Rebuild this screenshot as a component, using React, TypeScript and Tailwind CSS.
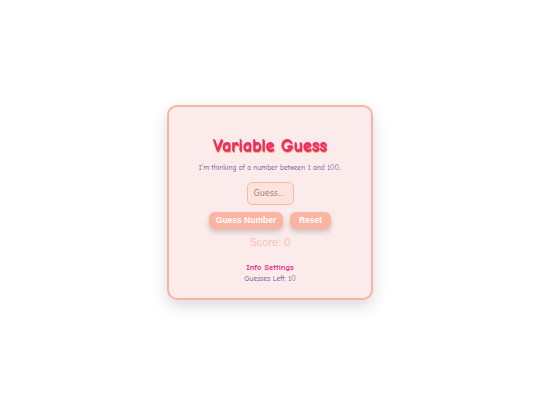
import React, { useState } from 'react';

const comic = { fontFamily: '"Comic Sans MS", "Comic Neue", "Chalkboard SE", cursive' };

export default function App() {
  const [guess, setGuess] = useState('');
  const [score, setScore] = useState(0);
  const [left, setLeft] = useState(10);

  return (
    <div className="w-[540px] h-[405px] bg-white flex items-center justify-center">
      <div
        className="w-[206px] h-[195px] mt-[-1px] flex flex-col items-center rounded-[10px] border-2 border-[#f9b3a3] bg-[#fbeceb] shadow-[0_6px_16px_rgba(0,0,0,0.15)] pt-[28px]"
        style={comic}
      >
        <h1 className="text-[18px] leading-[22px] font-bold text-[#ec2f6a] [text-shadow:0.5px_0.5px_0_#ec2f6a,1px_1.5px_0_#f9b25c]">
          Variable Guess
        </h1>
        <p className="mt-[6px] text-[7.3px] leading-[10px] text-[#6b4c8c]">
          I'm thinking of a number between 1 and 100..
        </p>
        <input
          value={guess}
          onChange={(e) => setGuess(e.target.value)}
          placeholder="Guess.."
          className="mt-[9px] w-[47px] h-[23px] px-[6px] rounded-[5px] border border-[#f8b9a6] bg-[#fde3db] text-[8px] text-[#7a6a6a] placeholder-[#8f8585] outline-none font-['DejaVu_Sans',sans-serif]"
        />
        <div className="mt-[7px] flex gap-[7px] font-['Liberation_Sans',Arial,sans-serif]">
          <button
            onClick={() => setLeft((l) => Math.max(0, l - 1))}
            className="w-[74px] h-[17px] rounded-[6px] bg-[#fbb4a2] text-white text-[8.5px] font-bold shadow-[0_3px_5px_rgba(0,0,0,0.18)]"
          >
            Guess Number
          </button>
          <button
            onClick={() => {
              setScore(0);
              setLeft(10);
              setGuess('');
            }}
            className="w-[41px] h-[17px] rounded-[6px] bg-[#fbb4a2] text-white text-[8.5px] font-bold shadow-[0_3px_5px_rgba(0,0,0,0.18)]"
          >
            Reset
          </button>
        </div>
        <div className="mt-[6px] text-[11px] leading-[14px] text-[#fbc1b2] font-['Liberation_Sans',Arial,sans-serif]">
          Score: {score}
        </div>
        <div className="mt-[13px] text-[8.5px] leading-[10px] font-bold text-[#e2297f]">Info Settings</div>
        <div className="mt-[2px] text-[7.5px] leading-[9px] text-[#6b4c8c]">Guesses Left: {left}</div>
      </div>
    </div>
  );
}
